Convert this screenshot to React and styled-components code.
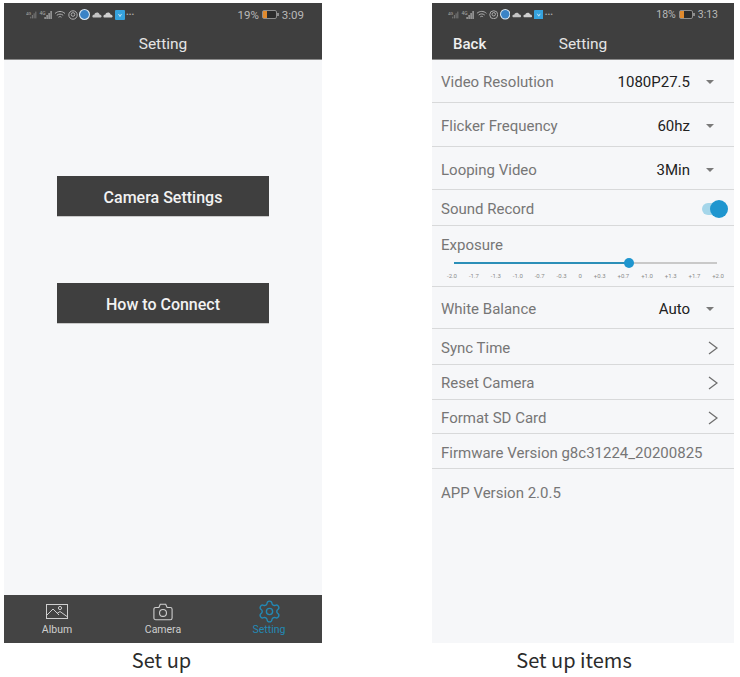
import React from 'react';
import styled, { createGlobalStyle } from 'styled-components';
import { Settings } from 'lucide-react';

const GlobalStyle = createGlobalStyle`
    html, body {
        margin: 0;
        padding: 0;
        background: #ffffff;
    }
    * {
        box-sizing: border-box;
    }
`;

const Page = styled.div`
    display: grid;
    grid-template-columns: 318px 302px;
    column-gap: 110px;
    width: 740px;
    height: 677px;
    padding: 3px 0 0 4px;
    font-family: Roboto, "Liberation Sans", sans-serif;
`;

const Column = styled.div`
    display: flex;
    flex-direction: column;
`;

const Phone = styled.div`
    display: flex;
    flex-direction: column;
    height: 640px;
    background: #f6f7f9;
`;

const Caption = styled.div`
    height: 34px;
    line-height: 33px;
    padding-right: ${(props) => props.$shift}px;
    text-align: center;
    font-family: "Noto Sans CJK SC", "Noto Sans", sans-serif;
    font-size: 20px;
    color: #2b2b2b;
`;

const Header = styled.div`
    height: 57px;
    flex: none;
    background: #3f3f3f;
    border-bottom: 1px solid #8a8a8a;
`;

const StatusRow = styled.div`
    display: flex;
    align-items: center;
    justify-content: space-between;
    height: 21px;
    padding: 2px ${(props) => props.$right}px 0 ${(props) => props.$left}px;
    color: #b9b9b9;
    font-size: ${(props) => props.$size}px;
`;

const StatusIcons = styled.div`
    display: flex;
    align-items: center;
    gap: ${(props) => props.$gap}px;
`;

const StatusRight = styled.div`
    display: flex;
    align-items: center;
    gap: 3px;
`;

const Dots = styled.span`
    font-size: 8px;
    color: #a8a8a8;
    line-height: 8px;
`;

const TitleBar = styled.div`
    position: relative;
    height: 35px;
    padding-top: 4px;
    display: flex;
    align-items: center;
    justify-content: center;
    color: #e4e4e4;
    font-size: 15.5px;
`;

const BackLabel = styled.span`
    position: absolute;
    left: 21px;
    top: 11px;
    font-size: 15px;
    font-weight: 500;
    color: #f0f0f0;
`;

const ButtonArea = styled.div`
    flex: 1;
    display: flex;
    flex-direction: column;
    align-items: center;
    gap: 66px;
    padding-top: 116px;
`;

const BigButton = styled.button`
    width: 212px;
    height: 41px;
    padding: 2px 0 0;
    border: 0;
    outline: 0;
    background: #3f3f3f;
    border-bottom: 1px solid #c9c9c9;
    color: #f2f2f2;
    font-family: inherit;
    font-size: 16px;
    font-weight: 500;
`;

const TabBar = styled.div`
    height: 48px;
    flex: none;
    display: grid;
    grid-template-columns: repeat(3, 106px);
    background: #444444;
`;

const Tab = styled.div`
    display: flex;
    flex-direction: column;
    align-items: center;
    padding-top: 4px;
    color: ${(props) => (props.$active ? '#2389b5' : '#cfcfcf')};
    font-size: 10.5px;
    line-height: 11px;
`;

const TabIcon = styled.div`
    height: 25px;
    display: flex;
    align-items: center;
    justify-content: center;
`;

const Row = styled.div`
    height: ${(props) => props.$height}px;
    flex: none;
    display: flex;
    align-items: center;
    justify-content: space-between;
    padding: ${(props) => props.$top ?? 2}px ${(props) => props.$pad || 16}px 0 9px;
    border-bottom: ${(props) => (props.$plain ? '0' : '1px solid #d8d9da')};
`;

const Label = styled.span`
    font-size: 15px;
    color: #767676;
    white-space: nowrap;
`;

const ValueGroup = styled.div`
    display: flex;
    align-items: center;
    gap: 16px;
`;

const Value = styled.span`
    font-size: 15px;
    color: #222222;
`;

const Caret = styled.span`
    width: 0;
    height: 0;
    border-left: 4px solid transparent;
    border-right: 4px solid transparent;
    border-top: 4px solid #7a7a7a;
`;

const Toggle = styled.div`
    position: relative;
    width: 24px;
    height: 12px;
    border-radius: 6px;
    background: #a5d6ea;
`;

const ToggleThumb = styled.span`
    position: absolute;
    right: -2px;
    top: -3px;
    width: 18px;
    height: 18px;
    border-radius: 50%;
    background: #1f96cf;
`;

const ExposureBlock = styled.div`
    height: 61px;
    flex: none;
    padding: 9px 9px 0 9px;
    border-bottom: 1px solid #d8d9da;
`;

const SliderTrack = styled.div`
    position: relative;
    height: 2px;
    margin: 8px 8px 0 13px;
    background: #c9c9c9;
`;

const SliderFill = styled.div`
    height: 2px;
    background: #2b8fb8;
`;

const SliderThumb = styled.span`
    position: absolute;
    top: -4px;
    width: 10px;
    height: 10px;
    margin-left: -5px;
    border-radius: 50%;
    background: #1f96cf;
`;

const Ticks = styled.div`
    display: flex;
    justify-content: space-between;
    margin: 8px 1px 0 6px;
    font-size: 6px;
    line-height: 8px;
    color: #8a8a8a;
`;

const IconSvg = styled.svg`
    display: block;
    flex: none;
`;

const ticks = ['-2.0', '-1.7', '-1.3', '-1.0', '-0.7', '-0.3', '0', '+0.3', '+0.7', '+1.0', '+1.3', '+1.7', '+2.0'];

function SignalIcon({ width, color }) {
    return (
        <IconSvg width={width} height="10" viewBox="0 0 13 10">
            <text x="0" y="4.500" fontSize="5" fill="#a8a8a8">4G</text>
            <rect x="5" y="7" width="1.200" height="2" fill={color} />
            <rect x="7" y="5" width="1.200" height="4" fill={color} />
            <rect x="9" y="3" width="1.200" height="6" fill={color} />
            <rect x="11" y="1" width="1.200" height="8" fill={color} />
        </IconSvg>
    );
}

function StatusIconSet({ scale }) {
    const s = scale;
    return (
        <>
            <SignalIcon width={11} color="#7a7a7a" />
            <SignalIcon width={14} color="#b5b5b5" />
            <IconSvg width={12 * s} height={10 * s} viewBox="0 0 12 10" fill="none" stroke="#b0b0b0" strokeWidth="1">
                <path d="M1 3.5C4 .8 8 .8 11 3.5M2.8 5.3C4.8 3.7 7.2 3.7 9.2 5.3M4.5 7.2C5.5 6.4 6.5 6.4 7.5 7.2" />
            </IconSvg>
            <IconSvg width={10 * s} height={10 * s} viewBox="0 0 10 10" fill="none" stroke="#b0b0b0" strokeWidth="1">
                <circle cx="5" cy="5" r="4.2" />
                <circle cx="5" cy="4.5" r="1.8" />
            </IconSvg>
            <IconSvg width={11 * s} height={11 * s} viewBox="0 0 10 10">
                <circle cx="5" cy="5" r="5" fill="#d9e8f3" />
                <circle cx="5" cy="5" r="4" fill="#3a83c6" />
            </IconSvg>
            <IconSvg width={10 * s} height={7} viewBox="0 0 10 7">
                <path d="M1 6.5C-.5 5 1 3.3 2.3 3.8 2.8 1 6.8.8 7.5 3.4 9.6 3.4 10.3 6 8.8 6.5Z" fill="#c4c4c4" />
            </IconSvg>
            <IconSvg width={10 * s} height={7} viewBox="0 0 10 7">
                <path d="M1 6.5C-.5 5 1 3.3 2.3 3.8 2.8 1 6.8.8 7.5 3.4 9.6 3.4 10.3 6 8.8 6.5Z" fill="#d0d0d0" />
            </IconSvg>
            <IconSvg width={10 * s} height={10 * s} viewBox="0 0 10 10">
                <rect width="10" height="10" rx="1" fill="#35a2de" />
                <path d="M3.500 4 5 6.500 6.500 4" fill="none" stroke="#cfe9f7" strokeWidth="0.9" />
            </IconSvg>
            <Dots>•••</Dots>
        </>
    );
}

function Battery({ width, level }) {
    return (
        <IconSvg width={width} height="9" viewBox={`0 0 ${width} 9`}>
            <rect x="0.5" y="0.5" width={width - 3} height="8" rx="1.5" fill="#2c2c2c" stroke="#8d8d8d" />
            <rect x="1" y="1" width={level} height="7" fill="#e08a2e" />
            <rect x={width - 2} y="3" width="2" height="3" fill="#8d8d8d" />
        </IconSvg>
    );
}

function StatusBar({ left, right, size, gap, scale, battery, batteryWidth, time }) {
    return (
        <StatusRow $left={left} $right={right} $size={size}>
            <StatusIcons $gap={gap}>
                <StatusIconSet scale={scale} />
            </StatusIcons>
            <StatusRight>
                <span>{battery}</span>
                <Battery width={batteryWidth} level={4} />
                <span>{time}</span>
            </StatusRight>
        </StatusRow>
    );
}

function AlbumIcon() {
    return (
        <IconSvg width="22" height="15" viewBox="0 0 22 15" fill="none" stroke="#cfcfcf" strokeWidth="1">
            <rect x="0.5" y="0.5" width="21" height="14" />
            <path d="M1 11 7 5l6 6M11 9.5l3-2 7 5" />
            <circle cx="14" cy="4" r="1.6" />
        </IconSvg>
    );
}

function CameraIcon() {
    return (
        <IconSvg width="20" height="18" viewBox="0 0 22 19" fill="none" stroke="#cfcfcf" strokeWidth="1.2">
            <path d="M3 4.5h3.5L8 1h6l1.5 3.5H19a2 2 0 0 1 2 2V16a2 2 0 0 1-2 2H3a2 2 0 0 1-2-2V6.500a2 2 0 0 1 2-2Z" />
            <circle cx="11" cy="10.500" r="3.800" />
        </IconSvg>
    );
}

function Chevron() {
    return (
        <IconSvg width="10" height="14" viewBox="0 0 10 14" fill="none" stroke="#6e6e6e" strokeWidth="1.3">
            <path d="M1 1l8 6-8 6" />
        </IconSvg>
    );
}

function SelectRow({ label, value, height, top }) {
    return (
        <Row $height={height} $pad={20} $top={top}>
            <Label>{label}</Label>
            <ValueGroup>
                <Value>{value}</Value>
                <Caret />
            </ValueGroup>
        </Row>
    );
}

function LinkRow({ label, height }) {
    return (
        <Row $height={height}>
            <Label>{label}</Label>
            <Chevron />
        </Row>
    );
}

export default function App() {
    const exposure = 66.5;

    return (
        <Page>
            <GlobalStyle />
            <Column>
                <Phone>
                    <Header>
                        <StatusBar left={22} right={18} size={11.5} gap={1.5} scale={1} battery="19%" batteryWidth={17} time="3:09" />
                        <TitleBar>Setting</TitleBar>
                    </Header>
                    <ButtonArea>
                        <BigButton>Camera Settings</BigButton>
                        <BigButton>How to Connect</BigButton>
                    </ButtonArea>
                    <TabBar>
                        <Tab>
                            <TabIcon><AlbumIcon /></TabIcon>
                            Album
                        </Tab>
                        <Tab>
                            <TabIcon><CameraIcon /></TabIcon>
                            Camera
                        </Tab>
                        <Tab $active>
                            <TabIcon><Settings size={25} strokeWidth={1.3} /></TabIcon>
                            Setting
                        </Tab>
                    </TabBar>
                </Phone>
                <Caption $shift={3}>Set up</Caption>
            </Column>
            <Column>
                <Phone>
                    <Header>
                        <StatusBar left={16} right={16} size={10.5} gap={1.5} scale={0.95} battery="18%" batteryWidth={16} time="3:13" />
                        <TitleBar>
                            <BackLabel>Back</BackLabel>
                            Setting
                        </TitleBar>
                    </Header>
                    <SelectRow label="Video Resolution" value="1080P27.5" height={43} />
                    <SelectRow label="Flicker Frequency" value="60hz" height={44} />
                    <SelectRow label="Looping Video" value="3Min" height={43} top={4} />
                    <Row $height={36} $pad={8}>
                        <Label>Sound Record</Label>
                        <Toggle><ToggleThumb /></Toggle>
                    </Row>
                    <ExposureBlock>
                        <Label>Exposure</Label>
                        <SliderTrack>
                            <SliderFill style={{ width: `${exposure}%` }} />
                            <SliderThumb style={{ left: `${exposure}%` }} />
                        </SliderTrack>
                        <Ticks>
                            {ticks.map((tick) => <span key={tick}>{tick}</span>)}
                        </Ticks>
                    </ExposureBlock>
                    <SelectRow label="White Balance" value="Auto" height={42} />
                    <LinkRow label="Sync Time" height={36} />
                    <LinkRow label="Reset Camera" height={35} />
                    <LinkRow label="Format SD Card" height={34} />
                    <Row $height={35} $top={4}>
                        <Label>Firmware Version g8c31224_20200825</Label>
                    </Row>
                    <Row $height={47} $plain $top={0}>
                        <Label>APP Version 2.0.5</Label>
                    </Row>
                </Phone>
                <Caption $shift={18}>Set up items</Caption>
            </Column>
        </Page>
    );
}
